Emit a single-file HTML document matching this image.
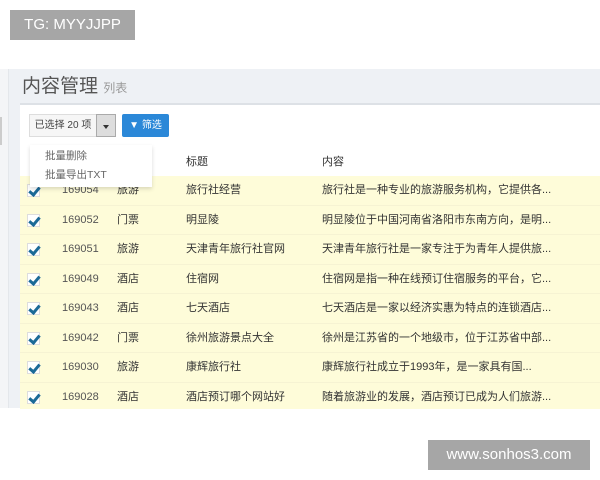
<!DOCTYPE html>
<html><head><meta charset="utf-8"><style>
*{margin:0;padding:0;box-sizing:border-box}
body{width:600px;height:480px;background:#fff;position:relative;overflow:hidden;font-family:"Liberation Sans","Noto Sans CJK SC",sans-serif;color:#333}
.a{position:absolute}
.row{position:absolute;left:20px;width:580px;height:29.5px;background:#fefcd9;border-bottom:1px solid #f6f3d3;font-size:11px}
.row span{position:absolute;top:0;line-height:28px;white-space:nowrap}
.cb{position:absolute;left:7px;top:8px;width:13px;height:13px;background:#fff;border:1px solid #ddd}
.cb:after{content:"";position:absolute;left:3px;top:0px;width:4px;height:8px;border:solid #1b6a97;border-width:0 3px 3px 0;transform:rotate(40deg)}
</style></head><body>
<div class="a" style="left:10px;top:10px;width:125px;height:30px;background:#a6a6a6;color:#fff;font-size:15px;line-height:30px;text-align:center">TG: MYYJJPP</div>
<div class="a" style="left:0;top:69px;width:8px;height:339px;background:#f4f5f7"></div>
<div class="a" style="left:0;top:117px;width:2px;height:28px;background:#ccc"></div>
<div class="a" style="left:8px;top:69px;width:12px;height:339px;background:#eef1f5;border-left:1px solid #e4e7eb"></div>
<div class="a" style="left:20px;top:69px;width:580px;height:35px;background:#eef1f5"></div>
<div class="a" style="left:22px;top:71px;font-size:19px;color:#555">内容管理 <span style="font-size:12px;color:#999">列表</span></div>
<div class="a" style="left:20px;top:103px;width:580px;height:2px;background:#dde1e6"></div>
<div class="a" style="left:20px;top:105px;width:580px;height:71px;background:#fff"></div>
<div class="a" style="left:29px;top:114px;width:68px;height:23px;border:1px solid #ddd;background:#f6f6f6;font-size:10px;line-height:21px;text-align:center;color:#444">已选择 20 项</div>
<div class="a" style="left:96px;top:114px;width:20px;height:23px;border:1px solid #aaa;background:#ddd"><div style="position:absolute;left:6px;top:10px;border:3px solid transparent;border-top:4px solid #333"></div></div>
<div class="a" style="left:122px;top:114px;width:47px;height:23px;background:#2b88d8;border-radius:2px;color:#fff;font-size:10px;line-height:23px;text-align:center">▼ 筛选</div>
<div class="a" style="left:124px;top:153px;font-size:11px">务</div>
<div class="a" style="left:186px;top:153px;font-size:11px">标题</div>
<div class="a" style="left:322px;top:153px;font-size:11px">内容</div>
<div class="a" style="left:30px;top:145px;width:122px;height:42px;background:#fff;box-shadow:0 2px 4px rgba(0,0,0,.15);z-index:2;font-size:10.5px;color:#666">
<div style="position:absolute;left:15px;top:3px">批量删除</div><div style="position:absolute;left:15px;top:22px">批量导出TXT</div></div>
<div class="row" style="top:176px"><div class="cb"></div><span style="left:42px;color:#555">169054</span><span style="left:97px">旅游</span><span style="left:166px">旅行社经营</span><span style="left:302px">旅行社是一种专业的旅游服务机构，它提供各...</span></div>
<div class="row" style="top:205.5px"><div class="cb"></div><span style="left:42px;color:#555">169052</span><span style="left:97px">门票</span><span style="left:166px">明显陵</span><span style="left:302px">明显陵位于中国河南省洛阳市东南方向，是明...</span></div>
<div class="row" style="top:235px"><div class="cb"></div><span style="left:42px;color:#555">169051</span><span style="left:97px">旅游</span><span style="left:166px">天津青年旅行社官网</span><span style="left:302px">天津青年旅行社是一家专注于为青年人提供旅...</span></div>
<div class="row" style="top:264.5px"><div class="cb"></div><span style="left:42px;color:#555">169049</span><span style="left:97px">酒店</span><span style="left:166px">住宿网</span><span style="left:302px">住宿网是指一种在线预订住宿服务的平台，它...</span></div>
<div class="row" style="top:294px"><div class="cb"></div><span style="left:42px;color:#555">169043</span><span style="left:97px">酒店</span><span style="left:166px">七天酒店</span><span style="left:302px">七天酒店是一家以经济实惠为特点的连锁酒店...</span></div>
<div class="row" style="top:323.5px"><div class="cb"></div><span style="left:42px;color:#555">169042</span><span style="left:97px">门票</span><span style="left:166px">徐州旅游景点大全</span><span style="left:302px">徐州是江苏省的一个地级市，位于江苏省中部...</span></div>
<div class="row" style="top:353px"><div class="cb"></div><span style="left:42px;color:#555">169030</span><span style="left:97px">旅游</span><span style="left:166px">康辉旅行社</span><span style="left:302px">康辉旅行社成立于1993年，是一家具有国...</span></div>
<div class="row" style="top:382.5px;height:26px;border:0"><div class="cb"></div><span style="left:42px;color:#555">169028</span><span style="left:97px">酒店</span><span style="left:166px">酒店预订哪个网站好</span><span style="left:302px">随着旅游业的发展，酒店预订已成为人们旅游...</span></div>
<div class="a" style="left:428px;top:440px;width:162px;height:30px;background:#a6a6a6;color:#fff;font-size:15px;line-height:30px;text-align:center">www.sonhos3.com</div>
</body></html>
